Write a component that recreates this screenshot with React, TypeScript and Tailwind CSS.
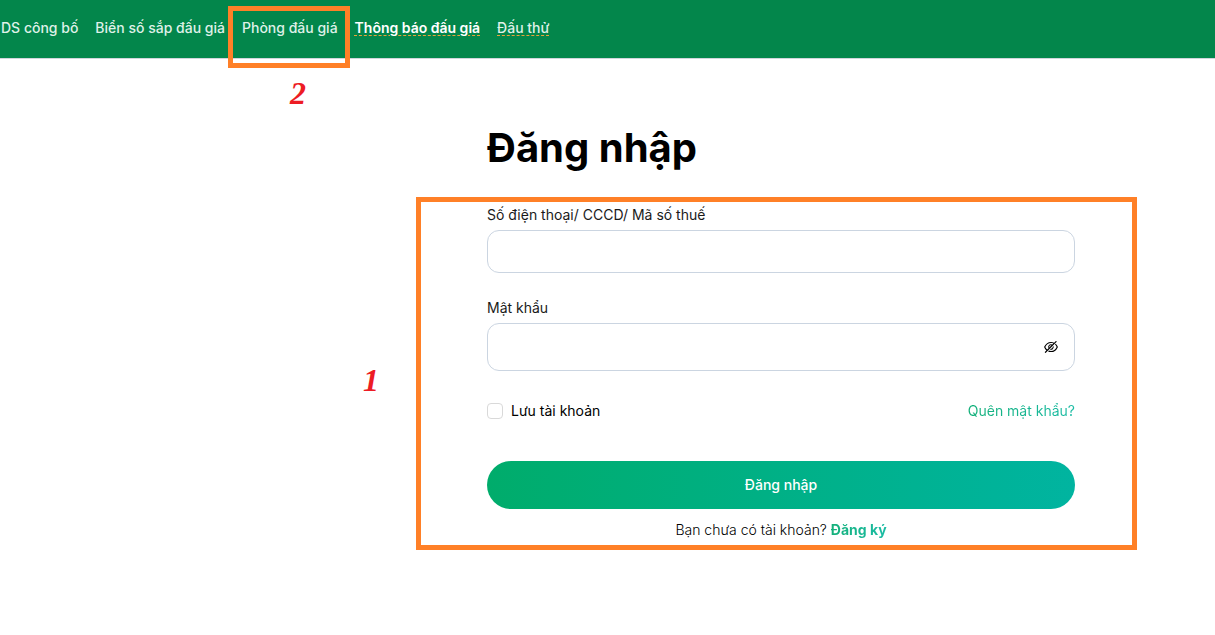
import { useState } from "react";
import { AiOutlineEyeInvisible, AiOutlineEye } from "react-icons/ai";

const navItems = [
  { label: "DS công bố", href: "#cong-bo" },
  { label: "Biển số sắp đấu giá", href: "#bien-so" },
  { label: "Phòng đấu giá", href: "#phong-dau-gia", highlight: true },
  { label: "Thông báo đấu giá", href: "#thong-bao", underline: true, bold: true },
  { label: "Đấu thử", href: "#dau-thu", underline: true },
];

function Header() {
  return (
    <header className="border-b border-gray-300 bg-[#03864b]">
      <nav className="flex h-[58px] items-start gap-[17px] pl-px pt-[17px] text-sm leading-[22px] text-[#dff1e8]">
        {navItems.map((item) => (
          <a
            key={item.label}
            href={item.href}
            className={`relative whitespace-nowrap ${item.bold ? "font-semibold text-white" : "font-medium"} ${
              item.underline
                ? "underline decoration-[#e8a33a] decoration-dashed decoration-1 underline-offset-2"
                : ""
            }`}
          >
            {item.label}
            {item.highlight && (
              <>
                <span className="absolute -left-3.5 -right-3 -top-[11px] h-[62px] border-5 border-[#ff8027]" />
                <span className="absolute left-12 top-[58px] font-['Liberation_Serif',serif] text-[32px] font-bold italic leading-9 text-[#ed1c24]">
                  2
                </span>
              </>
            )}
          </a>
        ))}
      </nav>
    </header>
  );
}

export default function App() {
  const [account, setAccount] = useState("");
  const [password, setPassword] = useState("");
  const [showPassword, setShowPassword] = useState(false);
  const [remember, setRemember] = useState(false);

  const handleSubmit = (e: React.FormEvent) => {
    e.preventDefault();
  };

  return (
    <div className="min-h-screen overflow-x-hidden bg-white font-[Inter,sans-serif] text-black">
      <Header />

      <main className="flex">
        <div className="w-2/5 shrink-0" />
        <section className="flex-1 pl-px pr-[140px] pt-16">
          <h1 className="text-[40px] font-bold leading-[50px]">Đăng nhập</h1>

          <form
            onSubmit={handleSubmit}
            className="relative mt-[31px] text-sm leading-[22px]"
          >
            <div className="pointer-events-none absolute -bottom-[9px] -left-[71px] -right-[62px] -top-[7px] border-5 border-[#ff8027]" />
            <span className="absolute -left-[124px] top-[158px] font-['Liberation_Serif',serif] text-[32px] font-bold italic leading-9 text-[#ed1c24]">
              1
            </span>

            <label htmlFor="account" className="block font-normal text-[#1a1a1a]">
              Số điện thoại/ CCCD/ Mã số thuế
            </label>
            <input
              id="account"
              type="text"
              value={account}
              onChange={(e) => setAccount(e.target.value)}
              className="mt-1 block h-[43px] w-full rounded-xl border border-[#cbd5e1] px-4 outline-none"
            />

            <label htmlFor="password" className="mt-6 block font-normal text-[#1a1a1a]">
              Mật khẩu
            </label>
            <div className="mt-1 flex h-12 items-center rounded-xl border border-[#cbd5e1] px-[15px]">
              <input
                id="password"
                type={showPassword ? "text" : "password"}
                value={password}
                onChange={(e) => setPassword(e.target.value)}
                className="min-w-0 flex-1 outline-none"
              />
              <button
                type="button"
                aria-label="Hiện mật khẩu"
                onClick={() => setShowPassword(!showPassword)}
              >
                {showPassword ? (
                  <AiOutlineEye size={16} />
                ) : (
                  <AiOutlineEyeInvisible size={16} />
                )}
              </button>
            </div>

            <div className="mt-[29px] flex items-center justify-between">
              <label className="flex items-center gap-2">
                <input
                  type="checkbox"
                  checked={remember}
                  onChange={(e) => setRemember(e.target.checked)}
                  className="size-4 appearance-none rounded border border-[#d9d9d9] bg-white checked:bg-[#00ac6b]"
                />
                Lưu tài khoản
              </label>
              <a
                href="#quen-mat-khau"
                className="bg-linear-to-r from-[#14b07a] to-[#1cbca5] bg-clip-text text-transparent"
              >
                Quên mật khẩu?
              </a>
            </div>

            <button
              type="submit"
              className="mt-[39px] block h-12 w-full rounded-full bg-linear-to-r from-[#00ac6b] to-[#01b4a0] font-medium text-white"
            >
              Đăng nhập
            </button>

            <p className="mt-2.5 text-center font-light">
              Bạn chưa có tài khoản?{" "}
              <a
                href="#dang-ky"
                className="bg-linear-to-r from-[#14b07a] to-[#1cbca5] bg-clip-text font-bold text-transparent"
              >
                Đăng ký
              </a>
            </p>
          </form>
        </section>
      </main>
    </div>
  );
}
